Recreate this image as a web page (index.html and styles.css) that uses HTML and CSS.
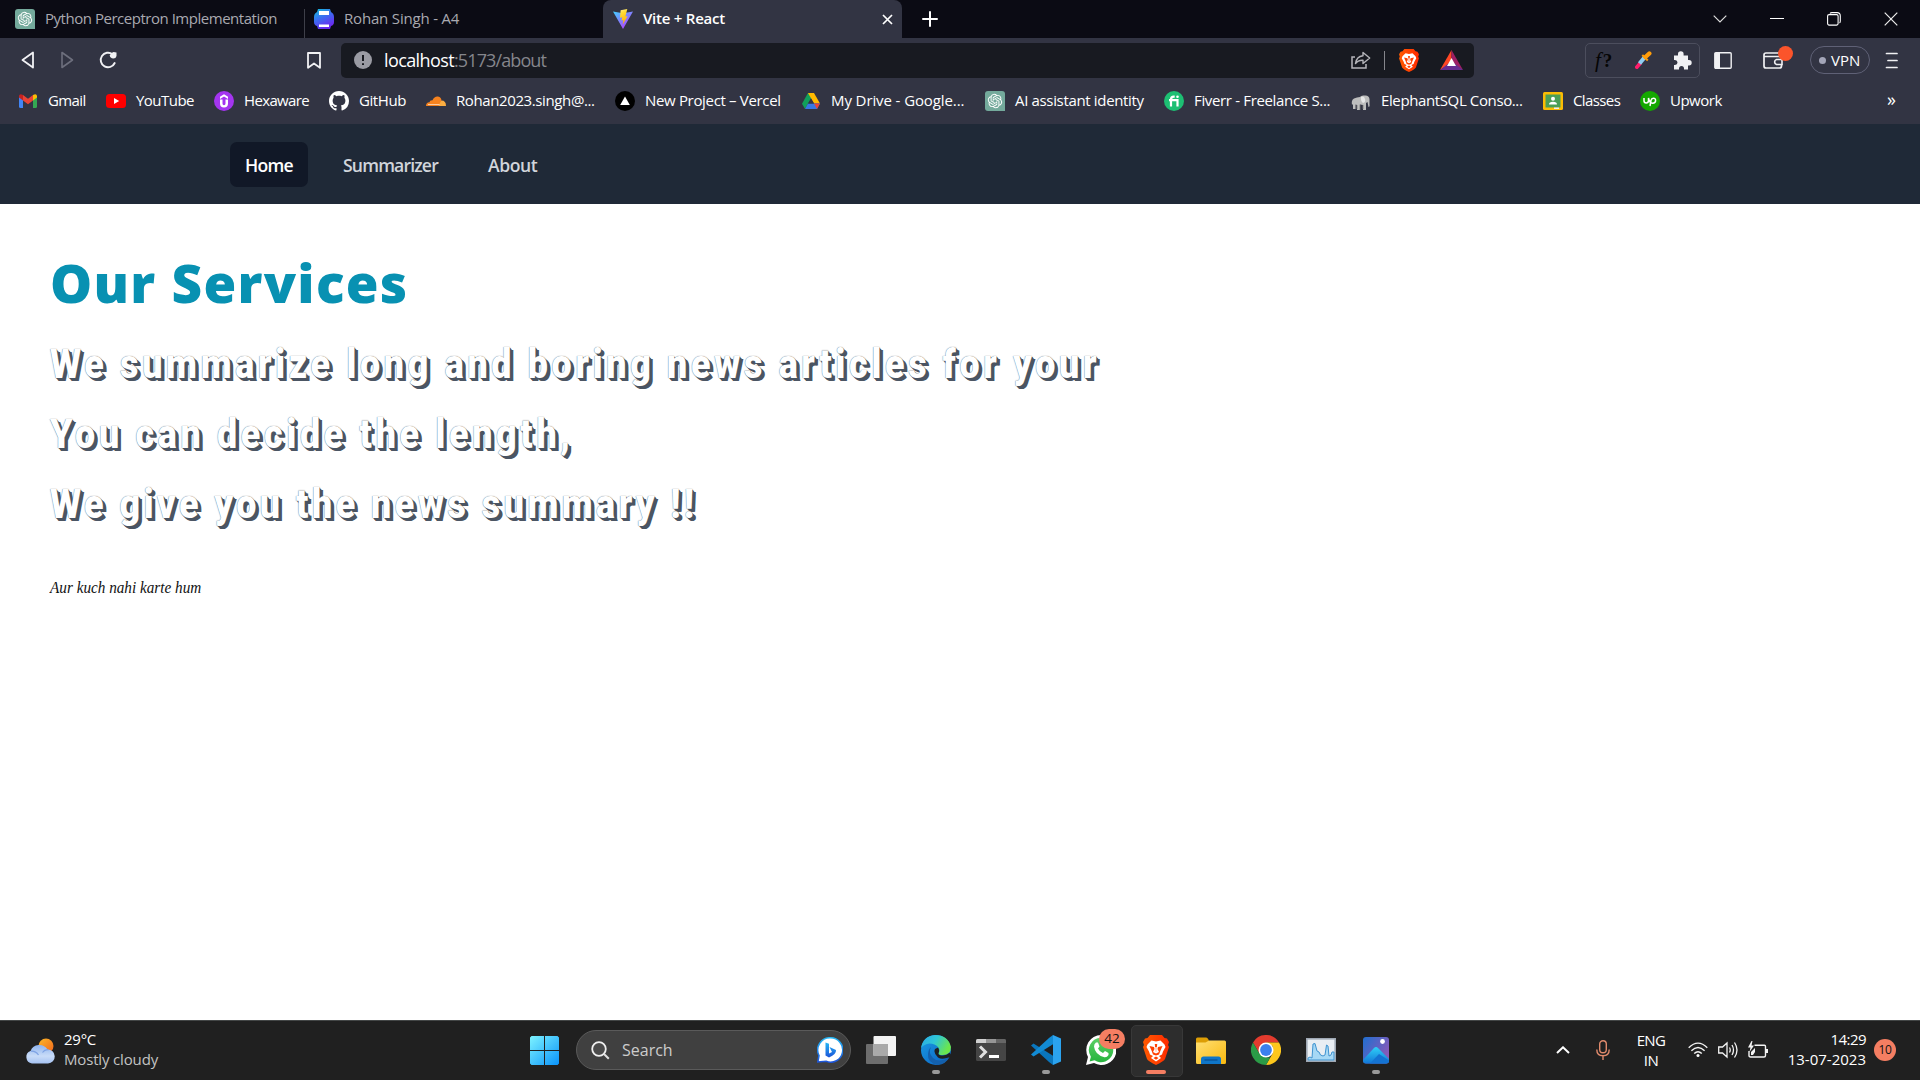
FILE: index.html
```html
<!DOCTYPE html>
<html lang="en">
<head>
<meta charset="utf-8">
<title>Vite + React</title>
<link rel="stylesheet" href="styles.css">
</head>
<body>
<svg class="defs" aria-hidden="true">
  <defs>
    <linearGradient id="vite-a" x1="0" y1="0" x2=".8" y2="1"><stop offset="0" stop-color="#41d1ff"/><stop offset="1" stop-color="#bd34fe"/></linearGradient>
    <linearGradient id="vite-b" x1=".4" y1="0" x2=".6" y2="1"><stop offset="0" stop-color="#ffea83"/><stop offset=".2" stop-color="#ffdd35"/><stop offset="1" stop-color="#ffa800"/></linearGradient>
    <linearGradient id="print" x1="0" y1="0" x2=".5" y2="1"><stop offset="0" stop-color="#12c2dc"/><stop offset=".5" stop-color="#3b6cf0"/><stop offset="1" stop-color="#6b2af0"/></linearGradient>
    <linearGradient id="win" x1="0" y1="0" x2="1" y2="1"><stop offset="0" stop-color="#7df3ff"/><stop offset="1" stop-color="#0a93fa"/></linearGradient>
    <linearGradient id="cloud" x1="0" y1="0" x2="0" y2="1"><stop offset="0" stop-color="#8fb4ee"/><stop offset=".6" stop-color="#c9dcf8"/><stop offset="1" stop-color="#a5c2f2"/></linearGradient>
    <linearGradient id="sun" x1="0" y1="0" x2="1" y2="1"><stop offset="0" stop-color="#fcb827"/><stop offset="1" stop-color="#f0641c"/></linearGradient>
    <linearGradient id="bing" x1="0" y1="0" x2="0" y2="1"><stop offset="0" stop-color="#25b7f5"/><stop offset="1" stop-color="#1d54d8"/></linearGradient>
    <linearGradient id="edge-a" x1="0" y1="0" x2="1" y2=".4"><stop offset="0" stop-color="#2aa8e8"/><stop offset=".5" stop-color="#2fc6d6"/><stop offset="1" stop-color="#6be64c"/></linearGradient>
    <linearGradient id="edge-b" x1="0" y1="0" x2="1" y2="1"><stop offset="0" stop-color="#1b9de2"/><stop offset="1" stop-color="#0a5fc4"/></linearGradient>
    <linearGradient id="folder" x1="0" y1="0" x2="1" y2="1"><stop offset="0" stop-color="#ffdf73"/><stop offset="1" stop-color="#f9b90f"/></linearGradient>
    <linearGradient id="wa" x1="0" y1="0" x2="0" y2="1"><stop offset="0" stop-color="#5bd066"/><stop offset="1" stop-color="#27b43e"/></linearGradient>
    <linearGradient id="photo" x1="0" y1="0" x2="1" y2=".6"><stop offset="0" stop-color="#1f6fd0"/><stop offset="1" stop-color="#8a5ab8"/></linearGradient>
    <linearGradient id="mount" x1="0" y1="0" x2="0" y2="1"><stop offset="0" stop-color="#2fd0f7"/><stop offset="1" stop-color="#1276d8"/></linearGradient>
    <linearGradient id="brave" x1="0" y1="0" x2="1" y2="0"><stop offset="0" stop-color="#ff5a00"/><stop offset="1" stop-color="#ff2a00"/></linearGradient>
    <symbol id="i-openai" viewBox="0 0 40 40"><path d="M6 0H34Q40 0 40 6V40H6Q0 40 0 34V6Q0 0 6 0Z" fill="#74aa9c"/><path transform="translate(5.6 5.6) scale(1.2)" fill="#fff" d="M22.2819 9.8211a5.9847 5.9847 0 0 0-.5157-4.9108 6.0462 6.0462 0 0 0-6.5098-2.9A6.0651 6.0651 0 0 0 4.9807 4.1818a5.9847 5.9847 0 0 0-3.9977 2.9 6.0462 6.0462 0 0 0 .7427 7.0966 5.98 5.98 0 0 0 .511 4.9107 6.051 6.051 0 0 0 6.5146 2.9001A5.9847 5.9847 0 0 0 13.2599 24a6.0557 6.0557 0 0 0 5.7718-4.2058 5.9894 5.9894 0 0 0 3.9977-2.9001 6.0557 6.0557 0 0 0-.7475-7.0729zm-9.022 12.6081a4.4755 4.4755 0 0 1-2.8764-1.0408l.1419-.0804 4.7783-2.7582a.7948.7948 0 0 0 .3927-.6813v-6.7369l2.02 1.1686a.071.071 0 0 1 .038.052v5.5826a4.504 4.504 0 0 1-4.4945 4.4944zm-9.6607-4.1254a4.4708 4.4708 0 0 1-.5346-3.0137l.142.0852 4.783 2.7582a.7712.7712 0 0 0 .7806 0l5.8428-3.3685v2.3324a.0804.0804 0 0 1-.0332.0615L9.74 19.9502a4.4992 4.4992 0 0 1-6.1408-1.6464zM2.3408 7.8956a4.485 4.485 0 0 1 2.3655-1.9728V11.6a.7664.7664 0 0 0 .3879.6765l5.8144 3.3543-2.0201 1.1685a.0757.0757 0 0 1-.071 0l-4.8303-2.7865A4.504 4.504 0 0 1 2.3408 7.872zm16.5963 3.8558L13.1038 8.364 15.1192 7.2a.0757.0757 0 0 1 .071 0l4.8303 2.7913a4.4944 4.4944 0 0 1-.6765 8.1042v-5.6772a.79.79 0 0 0-.407-.667zm2.0107-3.0231l-.142-.0852-4.7735-2.7818a.7759.7759 0 0 0-.7854 0L9.409 9.2297V6.8974a.0662.0662 0 0 1 .0284-.0615l4.8303-2.7866a4.4992 4.4992 0 0 1 6.6802 4.66zM8.3065 12.863l-2.02-1.1638a.0804.0804 0 0 1-.038-.0567V6.0742a4.4992 4.4992 0 0 1 7.3757-3.4537l-.142.0805L8.704 5.459a.7948.7948 0 0 0-.3927.6813zm1.0976-2.3654l2.602-1.4998 2.6069 1.4998v2.9994l-2.5974 1.4997-2.6067-1.4997Z"/></symbol>
    <symbol id="i-brave" viewBox="0 0 26 30"><path d="M7 0H19L21.500 3 24 3.500 26 7 25 10 26 12 22 24Q21 26 13 30 5 26 4 24L0 12 1 10 0 7 2 3.500 4.500 3Z" fill="url(#brave)"/><path d="M8.500 5.500 13 6.500 17.500 5.500 21.500 9.500 22.500 12 20 16.500 19 19.500 16 21 18 23 13 26.500 8 23 10 21 7 19.500 6 16.500 3.500 12 4.500 9.500Z" fill="#fff"/><path d="M6.500 11 11 12 11.500 14 10 17 13 18.500 16 17 14.500 14 15 12 19.500 11 17.500 15.500 16 19.500 13 20.500 10 19.500 8.500 15.500Z M10.500 23 13 21.500 15.500 23 13 24.800Z" fill="#ff4000"/><path d="M11.800 9H14.200L13.500 17H12.500Z" fill="#ff4000"/><path d="M12.300 12H13.700V17H12.300Z" fill="#fff"/></symbol>
  </defs>
</svg>

<header class="browser">
  <div class="tabs">
    <div class="tab tab-first"><svg class="ico"><use href="#i-openai"/></svg><span class="tab-title">Python Perceptron Implementation</span></div>
    <div class="tab tab-second">
      <svg class="ico" viewBox="0 0 20 20"><path d="M4 0H16L17 3Q20 4.500 20 8V13Q20 16 17 17L16 20H4L3 17Q0 16 0 13V8Q0 4.500 3 3Z" fill="url(#print)"/><path d="M5 2H15V6H5ZM5 15.500H15V18H5Z" fill="#fff"/></svg>
      <span class="tab-title">Rohan Singh - A4</span>
    </div>
    <div class="tab tab-active">
      <svg class="ico" viewBox="0 0 20 20"><path d="M0 2.500 10 20 20 2.500 10 4.300Z" fill="url(#vite-a)"/><path d="M14.300 0 7.600 1.300 7 8.800 9.200 8.300 8.600 11.400 10.400 10.900 9.700 15.500 14.600 7.200 12.400 7.600Z" fill="url(#vite-b)"/></svg>
      <span class="tab-title">Vite + React</span>
      <svg class="tab-close" viewBox="0 0 11 11"><path d="M1 1 10 10M10 1 1 10" stroke="#fff" stroke-width="1.700"/></svg>
    </div>
    <svg class="tab-new" viewBox="0 0 16 16"><path d="M8 1V15M1 8H15" stroke="#fff" stroke-width="2" stroke-linecap="round"/></svg>
    <div class="window-controls">
      <svg width="14" height="8" viewBox="0 0 14 8"><path d="M.7.7 7 7 13.300.7" fill="none" stroke="#ddd" stroke-width="1.200"/></svg>
      <svg width="14" height="2"><path d="M0 .5H14" stroke="#fff"/></svg>
      <svg width="14" height="14" viewBox="0 0 14 14" fill="none" stroke="#fff" stroke-width="1.100"><rect x=".6" y="2.600" width="10.500" height="10.500" rx="1.500"/><path d="M3 1.500Q3.500.6 5 .6H10Q13.300.6 13.300 4V9Q13.300 10.500 12.500 11"/></svg>
      <svg width="14" height="14" viewBox="0 0 14 14"><path d="M.7.7 13.300 13.300M13.300.7.7 13.300" stroke="#eee" stroke-width="1.200"/></svg>
    </div>
  </div>

  <div class="toolbar">
    <div class="nav-buttons">
      <svg width="14" height="18" viewBox="0 0 14 18"><path d="M12 1.500V16.500L1.500 9Z" fill="none" stroke="#f1f1f4" stroke-width="1.800" stroke-linejoin="round"/></svg>
      <svg width="14" height="18" viewBox="0 0 14 18"><path d="M2 1.500V16.500L12.500 9Z" fill="none" stroke="#6d6f7d" stroke-width="1.600" stroke-linejoin="round"/></svg>
      <svg width="18" height="18" viewBox="0 0 18 18"><path d="M13.500 3.200A7.300 7.300 0 1 0 15.700 12" fill="none" stroke="#f1f1f4" stroke-width="1.900" stroke-linecap="round"/><path d="M10.800 4.500Q11.500 1.500 14.500 1L17.500 1.500V5Q17 7.500 14.300 7.500 11 7 10.800 4.500Z" fill="#f1f1f4"/></svg>
    </div>
    <svg class="save" viewBox="0 0 14 17"><path d="M1 1H13V15.800L7 11.500 1 15.800Z" fill="none" stroke="#f1f1f4" stroke-width="1.800" stroke-linejoin="round"/></svg>
    <div class="address">
      <svg class="info" viewBox="0 0 18 18"><circle cx="9" cy="9" r="9" fill="#9a9ba3"/><path d="M9 4V10M9 12.200V14" stroke="#17191f" stroke-width="2"/></svg>
      <span class="url"><span class="host">localhost</span><span class="path">:5173/about</span></span>
      <svg class="share" viewBox="0 0 20 18"><path d="M4 6H1V17H15V13" fill="none" stroke="#b5b5ba" stroke-width="1.500"/><path d="M12 1.500 18.700 7 12 12.500V9.300Q7 9 4.500 12.500 5.500 5.500 12 4.800Z" fill="none" stroke="#b5b5ba" stroke-width="1.400" stroke-linejoin="round"/></svg>
      <span class="rule"></span>
      <svg class="shield"><use href="#i-brave"/></svg>
      <svg class="bat" viewBox="0 0 23 20"><path d="M11.500 0 0 20 11.500 13Z" fill="#ff4724"/><path d="M11.500 0 23 20 11.500 13Z" fill="#9e1f63"/><path d="M0 20H23L11.500 11Z" fill="#662d91"/><path d="M11.500 8 7 16H16Z" fill="#fff"/></svg>
    </div>
    <div class="extensions">
      <span class="formula"><i>f</i>?</span>
      <svg width="17" height="18" viewBox="0 0 17 18"><path d="M1.800 16.200 5 12.500" stroke="#ff1d6b" stroke-width="3.600" stroke-linecap="round"/><path d="M4.500 12.500 9.500 6.500" stroke="#8fcdf2" stroke-width="4"/><path d="M7.300 4 12.800 9.500" stroke="#ff9d0a" stroke-width="2"/><path d="M10.500 6 14.300 2.500" stroke="#ff9d0a" stroke-width="4.400" stroke-linecap="round"/></svg>
      <svg width="19" height="19" viewBox="0 0 19 19"><path d="M5 4.500V3A2.800 2.800 0 0 1 10.600 3V4.500H15V9H16A2.700 2.700 0 0 1 16 14.400H15V18.500H11V17.500A2.500 2.500 0 0 0 6 17.500V18.500H1V14H2A2.400 2.400 0 0 0 2 9H1V4.500Z" fill="#f1f1f4"/></svg>
    </div>
    <svg class="panel" viewBox="0 0 18 17"><rect x=".8" y=".8" width="16.400" height="15.400" rx="1" fill="none" stroke="#f1f1f4" stroke-width="1.400"/><path d="M1 1H6V16H1Z" fill="#f1f1f4"/></svg>
    <div class="wallet">
      <svg width="20" height="17" viewBox="0 0 20 17"><path d="M17 4.500V2.500Q17 1 15.500 1H3Q1 1 1 3V14Q1 16 3 16H16.500Q18.500 16 18.500 14V12M1 4.500H16.500Q18.500 4.500 18.500 7" fill="none" stroke="#f1f1f4" stroke-width="1.700"/><path d="M19 7.500H13.500A2.600 2.600 0 0 0 13.500 12.500H19Z" fill="none" stroke="#f1f1f4" stroke-width="1.600"/></svg>
      <span class="alert"></span>
    </div>
    <span class="vpn"><i></i><span>VPN</span></span>
    <svg class="menu" viewBox="0 0 14 17"><path d="M1.500 1.500H12M3 8.500H12M1.500 15.500H12" stroke="#f1f1f4" stroke-width="1.700" stroke-linecap="round"/></svg>
  </div>

  <nav class="bookmarks">
    <a><svg class="ico" viewBox="0 0 20 20"><path d="M1 4.500V15.500Q1 17 2.500 17H5V8Z" fill="#4285f4"/><path d="M19 4.500V15.500Q19 17 17.500 17H15V8Z" fill="#34a853"/><path d="M1 5Q1.500 2 5 4V9.500L1 6.500Z" fill="#c5221f"/><path d="M19 5Q18.500 2 15 4V9.500L19 6.500Z" fill="#fbbc04"/><path d="M5 4 10 7.800 15 4V9.500L10 13.300 5 9.500Z" fill="#ea4335"/></svg><span>Gmail</span></a>
    <a><svg class="ico" viewBox="0 0 20 20"><rect y="3" width="20" height="14" rx="3.500" fill="#f00"/><path d="M8 7V13L13.200 10Z" fill="#fff"/></svg><span>YouTube</span></a>
    <a><svg class="ico" viewBox="0 0 20 20"><circle cx="10" cy="10" r="10" fill="#a435f0"/><path d="M6 5.700 10 3.300 14 5.700V8L10 5.600 6 8ZM6 8.500H8.500V12.500Q8.500 14.300 10 14.300T11.500 12.500V8.500H14V12.500Q14 16.500 10 16.500T6 12.500Z" fill="#fff"/></svg><span>Hexaware</span></a>
    <a><svg class="ico" viewBox="0 0 16 16"><path fill="#fff" d="M8 0C3.580 0 0 3.580 0 8c0 3.540 2.290 6.530 5.470 7.590.4.070.55-.17.55-.38 0-.19-.01-.82-.01-1.490-2.010.37-2.530-.49-2.690-.94-.09-.23-.48-.94-.82-1.130-.28-.15-.68-.52-.01-.53.63-.01 1.080.58 1.230.82.72 1.210 1.870.87 2.330.66.070-.52.28-.87.51-1.070-1.780-.2-3.640-.89-3.640-3.950 0-.87.31-1.590.82-2.150-.08-.2-.36-1.020.08-2.120 0 0 .67-.21 2.200.82.64-.18 1.320-.27 2-.27s1.360.09 2 .27c1.530-1.040 2.200-.82 2.200-.82.44 1.100.16 1.920.08 2.120.51.56.82 1.270.82 2.150 0 3.070-1.870 3.750-3.650 3.950.29.25.54.73.54 1.480 0 1.070-.01 1.930-.01 2.200 0 .21.15.46.55.38A8.010 8.010 0 0 0 16 8c0-4.420-3.580-8-8-8z"/></svg><span>GitHub</span></a>
    <a><svg class="ico" viewBox="0 0 20 20"><path d="M0 15Q0 11.500 3.500 11.300 3.500 9 6.500 9.200 8.500 5 12 5.500 15.500 6 15.500 10L14.500 15Z" fill="#f6821f"/><path d="M15.500 9.500Q20 9.500 20 15H12.500Q13.500 12.500 15.500 9.500Z" fill="#fbad41"/><path d="M2 13.500H13.500" stroke="#fff" stroke-width=".6"/></svg><span>Rohan2023.singh@...</span></a>
    <a><svg class="ico" viewBox="0 0 20 20"><circle cx="10" cy="10" r="10" fill="#000"/><path d="M10 5.500 14.800 14H5.200Z" fill="#fff"/></svg><span>New Project – Vercel</span></a>
    <a><svg class="ico" viewBox="0 0 20 20"><path d="M7 2H13L10 7.500 4 18 1 12.800Z" fill="#11a05a"/><path d="M7 2H13L19 12.500H13Z" fill="#ffba00"/><path d="M7 12.500H19L16 18H4Z" fill="#3777e3"/><path d="M13 12.500H19L16 18Z" fill="#ea4335"/><path d="M10 7.500 13 12.500H7Z" fill="#323443"/></svg><span>My Drive - Google...</span></a>
    <a><svg class="ico"><use href="#i-openai"/></svg><span>AI assistant identity</span></a>
    <a><svg class="ico" viewBox="0 0 20 20"><circle cx="10" cy="10" r="10" fill="#1dbf73"/><path d="M7 15.500V8.500Q7 5.600 9.700 5.600H10.700M5 9.200H13.500V15.500" fill="none" stroke="#fff" stroke-width="2.200"/><circle cx="13.500" cy="5.800" r="1.300" fill="#fff"/></svg><span>Fiverr - Freelance S...</span></a>
    <a><svg class="ico" viewBox="0 0 20 20"><path d="M1 14Q0 9 3 7.500T9 6Q10 4 13.500 4.500 18 4 18.500 8L18.500 13Q19 16 17.500 16L16.500 11 15 12V19H12V14L9 13.500V19H6V14L4.500 13.500V18H2V13Z" fill="#bdbdbd"/><path d="M10 6Q13 4.500 14 8T12 12Q9.500 10 10 6Z" fill="#e6e6e6"/><path d="M9 13.500V19M6 14V18M12 14V18" stroke="#777" stroke-width=".8"/></svg><span>ElephantSQL Conso...</span></a>
    <a><svg class="ico" viewBox="0 0 20 20"><rect y="1" width="20" height="18" rx="1.500" fill="#fbbc04"/><rect x="2.500" y="3.500" width="15" height="13" fill="#4b9e56"/><circle cx="10" cy="7.800" r="2" fill="#fff"/><path d="M6 13.500Q6 10.800 10 10.800T14 13.500Z" fill="#fff"/><path d="M11 16.500H16V18H11Z" fill="#eee"/></svg><span>Classes</span></a>
    <a><svg class="ico" viewBox="0 0 20 20"><circle cx="10" cy="10" r="10" fill="#14a800"/><path d="M4 7V9.500Q4 12 6.200 12T8.500 9.500V7Q9.500 12 12.500 12.200 15.600 12 15.600 9.500T13.200 7.200Q11.500 7.200 11 9.300L10 15" fill="none" stroke="#fff" stroke-width="1.500"/></svg><span>Upwork</span></a>
    <span class="more">»</span>
  </nav>
</header>

<nav class="site-nav">
  <a class="current">Home</a><a>Summarizer</a><a>About</a>
</nav>

<main class="page">
  <h1>Our Services</h1>
  <p class="lead">We summarize long and boring news articles for your</p>
  <p class="lead">You can decide the length,</p>
  <p class="lead">We give you the news summary !!</p>
  <p class="note">Aur kuch nahi karte hum</p>
</main>

<footer class="taskbar">
  <div class="weather">
    <svg width="30" height="26" viewBox="0 0 30 26"><circle cx="21" cy="8" r="7.500" fill="url(#sun)"/><path d="M7 25.500A6.500 6.500 0 0 1 5.500 13 9.500 9.500 0 0 1 22.500 11.500 7 7 0 0 1 23 25.500Z" fill="url(#cloud)"/><path d="M6 13.200Q11 13 13.500 17M17.500 14.500Q20 11 23.500 11.800" fill="none" stroke="#7ea3e4" stroke-width="1.200"/></svg>
    <div class="report"><div class="temp">29°C</div><div class="sky">Mostly cloudy</div></div>
  </div>
  <div class="apps">
    <svg class="start" viewBox="0 0 29 29"><path d="M1.500 0H14V14H0V1.500ZM15 0H27.500L29 1.500V14H15ZM0 15H14V29H1.500L0 27.500ZM15 15H29V27.500L27.500 29H15Z" fill="url(#win)"/></svg>
    <div class="search">
      <svg width="19" height="19" viewBox="0 0 19 19"><circle cx="8" cy="8" r="6.800" fill="#4b4b4b" stroke="#f0f0f0" stroke-width="1.800"/><path d="M13 13 17.800 17.800" stroke="#e0e0e0" stroke-width="2"/></svg>
      <span class="search-text">Search</span>
      <svg class="bing" width="26" height="26" viewBox="0 0 26 26"><path d="M13.500.8A12.200 12.200 0 1 1 9 24.300L.8 25 2 18.500A12.200 12.200 0 0 1 13.500.8Z" fill="#fff" stroke="url(#bing)" stroke-width="1.600"/><path d="M8.500 5.500 12 6.800V16.500L15 15 12.500 10 19 13Q19.500 17 12 20.500L8.500 18.500Z" fill="url(#bing)"/></svg>
    </div>
    <div class="slot"><svg width="30" height="28" viewBox="0 0 30 28"><rect y="8" width="22" height="20" rx="1" fill="#6d6d6d"/><rect x="7.500" width="22.500" height="20" rx="1" fill="#f3f3f3"/><path d="M7.500 8H22V20H7.500Z" fill="#a9a9a9"/></svg></div>
    <div class="slot run"><svg width="30" height="30" viewBox="0 0 30 30"><circle cx="15" cy="15" r="15" fill="url(#edge-b)"/><path d="M0 13Q2 1 14 0 27 0 30 12 30 20 21.500 20 17 20 17.500 18 19.500 15 17 12 14 8.500 8.500 8.500 3 9 0 13Z" fill="url(#edge-a)"/><path d="M10 12Q7 18 12 23 18 28.500 28.500 22 25 29 17 30 6 28 7 19 7.500 14 10 12Z" fill="#1460ac"/><path d="M17.500 18Q17 20.500 22 20.500 26 20.300 28.500 17.800L31 21 28.500 22.200Q21 25 17 22.500 12 18 14 14L17 12.500Q19 15.500 17.500 18Z" fill="#202020"/></svg></div>
    <div class="slot"><svg width="30" height="22" viewBox="0 0 30 22"><rect width="30" height="22" rx="1.500" fill="#454545"/><path d="M0 4V1.500Q0 0 1.500 0H10V4Z" fill="#d0d0d0"/><path d="M10 0H20V4H10Z" fill="#969696"/><path d="M20 0H28.500Q30 0 30 1.500V4H20Z" fill="#666"/><path d="M4 7.500 9.500 13 4 18.500" fill="none" stroke="#e0e0e0" stroke-width="3"/><path d="M13 17.500H23" stroke="#fff" stroke-width="3"/></svg></div>
    <div class="slot run"><svg width="30" height="30" viewBox="0 0 30 30"><path d="M2.500 8.500 0 10.500 18 27 22 30 24 22Z" fill="#0a76bd"/><path d="M2.500 21.500 0 19.500 18 3 22 0 24 8Z" fill="#128bd4"/><path d="M22 0 30 3.500V26.500L22 30V21.500 8.500Z" fill="#2ba3ef"/></svg></div>
    <div class="slot"><svg width="30" height="30" viewBox="0 0 30 30"><path d="M15 0A15 15 0 1 1 8 28L0 30 2 22A15 15 0 0 1 15 0Z" fill="#fff"/><path d="M15 2.800A12.200 12.200 0 1 1 8.500 25.300L3.600 26.400 4.900 21.700A12.200 12.200 0 0 1 15 2.800Z" fill="url(#wa)"/><path d="M10 7.500H12L13.500 11.500 12 13.500Q13.500 17 17 18L19 16 22.500 18V20Q21 22.500 18.500 22.200 9 20 8 11.500 8 9 10 7.500Z" fill="#fff"/></svg><span class="badge">42</span></div>
    <div class="slot active"><svg width="26" height="30"><use href="#i-brave"/></svg></div>
    <div class="slot"><svg width="30" height="27" viewBox="0 0 30 27"><path d="M0 8V2Q0 .5 1.500.5H10Q12 .5 13 4L30 5V10H0Z" fill="#dd9e05"/><path d="M0 5.500H9.500L13 3.500H28.500Q30 3.500 30 5V25.500Q30 27 28.500 27H1.500Q0 27 0 25.500Z" fill="url(#folder)"/><path d="M5 27V22Q5 19.500 7.500 19.500H22.500Q25 19.500 25 22V27Z" fill="#0f76c9"/><path d="M8.500 23H21.500" stroke="#0a4f91" stroke-width="1.200"/></svg></div>
    <div class="slot"><svg width="30" height="30" viewBox="0 0 30 30"><path d="M2 7.500A15 15 0 0 1 28 7.500H15L8.500 18.700Z" fill="#e33b2e"/><path d="M28 7.500A15 15 0 0 1 15 30L21.500 18.700 21.500 11 15 7.500Z" fill="#fdc71c"/><path d="M15 30A15 15 0 0 1 2 7.500L8.500 18.700 15 22.500H19.300Z" fill="#2b9b47"/><circle cx="15" cy="15" r="7.500" fill="#fff"/><circle cx="15" cy="15" r="5.900" fill="#3b80ee"/></svg></div>
    <div class="slot"><svg width="30" height="24" viewBox="0 0 30 24"><rect x=".8" y=".8" width="28.400" height="22.400" fill="#e9eef3" stroke="#9fa8b4" stroke-width="1.600"/><path d="M2 20 4 19 6 20 7 6 9 5.500 11 13 13 14 14.500 17 17 18 19 17 20.500 7 22 8 23 18 25 17 26 14 28 14V22H2Z" fill="#a6d8f5" stroke="#3f93d0"/></svg></div>
    <div class="slot run"><svg width="26" height="27" viewBox="0 0 26 27"><rect width="26" height="26.500" rx="3" fill="url(#photo)"/><path d="M0 23 11 11Q13 9 15 11L26 22V23.500Q26 26.500 23 26.500H3Q0 26.500 0 23.500Z" fill="url(#mount)"/><path d="M7 26.500 16 17 26 23.500Q26 26.500 23 26.500Z" fill="#1473d2"/><circle cx="19.500" cy="4.500" r="2.400" fill="#fff"/></svg></div>
  </div>
  <div class="tray">
    <svg class="up" width="14" height="8" viewBox="0 0 14 8"><path d="M1 7 7 1.300 13 7" fill="none" stroke="#fff" stroke-width="2"/></svg>
    <svg class="mic" width="14" height="20" viewBox="0 0 14 20" fill="none" stroke="#e08a6c" stroke-width="1.400"><rect x="3.700" y=".8" width="6.600" height="12" rx="3.300"/><path d="M.8 9.500Q.8 15.700 7 15.700T13.200 9.500M7 15.700V20"/></svg>
    <div class="lang"><span>ENG</span><span>IN</span></div>
    <svg class="wifi" width="20" height="16" viewBox="0 0 20 16" fill="none" stroke="#f3f3f3" stroke-width="1.400"><path d="M.7 5.800Q10-3.500 19.300 5.800M3.400 8.800Q10 2.200 16.600 8.800M6.200 11.600Q10 7.800 13.800 11.600"/><circle cx="10" cy="13.500" r="1.500" fill="#fff" stroke="none"/></svg>
    <svg class="vol" width="20" height="18" viewBox="0 0 20 18" fill="none" stroke="#f3f3f3" stroke-width="1.300"><path d="M.7 6H4.500L9 2V16L4.500 12H.7ZM11.500 6.500Q13 9 11.500 11.500M14 4Q17 9 14 14M16.500 1.500Q21.500 9 16.500 16.500"/></svg>
    <svg class="batt" width="20" height="18" viewBox="0 0 20 18"><path d="M6.500 4.200H16.500Q17.500 4.200 17.500 5.500V14.500Q17.500 16 16 16H2.500Q1 16 1 14.500V10" fill="none" stroke="#f3f3f3" stroke-width="1.400"/><path d="M18 8H20V12H18ZM3.500 0 0 6.500H2.500L1.500 11 6 4.500H3.500L4.500 0ZM3 14V11L7 7V11L5 14Z" fill="#f3f3f3"/></svg>
    <div class="clock"><span class="time">14:29</span><span>13-07-2023</span></div>
    <span class="count">10</span>
  </div>
</footer>
</body>
</html>
```
FILE: styles.css
```css
* { box-sizing: border-box; }
body { margin: 0; width: 1920px; height: 1080px; overflow: hidden; display: flex; flex-direction: column; background: #fff; font-family: "Open Sans", "Noto Sans", sans-serif; white-space: nowrap; }
svg { display: block; flex: none; }
.defs { position: absolute; width: 0; height: 0; }
.ico { width: 20px; height: 20px; }

/* browser chrome */
.browser { height: 124px; background: #323443; color: #fff; flex: none; }
.tabs { height: 38px; background: #0b0b14; display: flex; align-items: center; }
.tab { height: 38px; display: flex; align-items: center; gap: 10px; font-size: 15px; color: #a9a9b0; }
.tab-title { padding-bottom: 2px; }
.tab-first { width: 304px; padding-left: 15px; letter-spacing: -.474px; }
.tab-second { width: 299px; padding-left: 10px; background: linear-gradient(#3e3f49, #3e3f49) 0 9px / 1px 29px no-repeat; letter-spacing: -.18px; }
.tab-active { width: 299px; padding: 0 9px 0 10px; background: #323443; color: #fff; font-weight: 600; border-radius: 8px 8px 0 0; letter-spacing: -.232px; }
.tab-close { width: 11px; height: 11px; margin-left: auto; }
.tab-new { width: 16px; height: 16px; margin-left: 20px; }
.window-controls { display: flex; align-items: center; gap: 43px; margin-left: auto; padding-right: 22px; }

.toolbar { height: 44px; display: flex; align-items: center; padding-left: 21px; }
.nav-buttons { display: flex; gap: 25px; width: 286px; }
.save { width: 14px; height: 17px; margin-right: 20px; }
.address { width: 1133px; height: 35px; background: #181a21; border-radius: 5px; display: flex; align-items: center; padding: 0 11px 0 13px; }
.info { width: 18px; height: 18px; margin-right: 12px; }
.url { font-size: 18px; }
.host { letter-spacing: -.601px; }
.path { color: #85868c; letter-spacing: -.891px; }
.share { width: 20px; height: 18px; margin-left: auto; }
.rule { width: 1px; height: 19px; background: #85868c; margin: 0 14px 0 13px; }
.shield { width: 20px; height: 23px; }
.bat { width: 23px; height: 20px; margin-left: 21px; }
.extensions { width: 115px; height: 35px; border: 1px solid #4c4e5d; border-radius: 5px; margin-left: 111px; padding: 0 7px; display: flex; align-items: center; justify-content: space-between; }
.formula { font: bold 19px/20px "Liberation Serif", serif; color: #050505; width: 20px; }
.formula i { font-size: 21px; font-weight: normal; margin: 0 2px 0 2px; }
.panel { width: 18px; height: 17px; margin-left: 14px; }
.wallet { position: relative; margin-left: 31px; }
.alert { position: absolute; left: 15px; top: -6px; width: 15px; height: 15px; border-radius: 50%; background: #fb542b; }
.vpn { width: 60px; height: 28px; border: 1px solid #5f6176; border-radius: 14px; margin-left: 27px; display: flex; align-items: center; padding-left: 8px; gap: 5px; font-size: 15px; }
.vpn span { padding-bottom: 1px; }
.vpn i { width: 7px; height: 7px; border-radius: 50%; background: #a3a5b8; }
.menu { width: 14px; height: 17px; margin-left: 15px; }

.bookmarks { height: 38px; display: flex; align-items: center; gap: 20px; padding-left: 18px; font-size: 15px; }
.bookmarks a { display: flex; align-items: center; gap: 10px; flex: none; }
.bookmarks a span { padding-bottom: 2px; }
.bookmarks a:nth-child(1) { width: 68px; letter-spacing: -.6px; }
.bookmarks a:nth-child(2) { width: 88px; letter-spacing: -.53px; }
.bookmarks a:nth-child(3) { width: 95px; letter-spacing: -.65px; }
.bookmarks a:nth-child(4) { width: 77px; letter-spacing: -.41px; }
.bookmarks a:nth-child(5) { width: 169px; letter-spacing: -.39px; }
.bookmarks a:nth-child(6) { width: 166px; letter-spacing: -.33px; }
.bookmarks a:nth-child(7) { width: 164px; letter-spacing: -.1px; }
.bookmarks a:nth-child(8) { width: 159px; letter-spacing: -.34px; }
.bookmarks a:nth-child(9) { width: 167px; letter-spacing: -.34px; }
.bookmarks a:nth-child(10) { width: 172px; letter-spacing: -.38px; }
.bookmarks a:nth-child(11) { width: 77px; letter-spacing: -.6px; }
.bookmarks a:nth-child(12) { letter-spacing: -.5px; }
.more { margin-left: auto; padding: 0 24px 4px 0; font-size: 18px; }

/* site */
.site-nav { height: 80px; flex: none; background: #1f2937; display: flex; align-items: center; padding: 1px 0 0 230px; gap: 20px; font-size: 17.6px; font-weight: 600; color: #d1d5db; }
.site-nav a { height: 45px; padding: 0 15px; border-radius: 7px; display: flex; align-items: center; letter-spacing: -.4px; }
.site-nav a:nth-child(2) { letter-spacing: -.84px; }
.site-nav .current { background: #111827; color: #fff; letter-spacing: -.72px; }

.page { flex: 1; padding: 43px 50px; }
.page h1 { margin: 0 0 10px; font: 800 53px/72px "Open Sans", sans-serif; color: #0891b2; letter-spacing: 1.3px; }
.page p { margin: 0; }
.page .lead { font: 900 41px/70px Roboto, sans-serif; color: #fff; letter-spacing: 4.25px; text-shadow: 0 0 1px #444, 1px 1px 0 #4b5563, 2px 2px 0 #4b5563, 3px 3px 0 #4b5563, 4px 3px 0 #4b5563; transform: scaleX(.873); transform-origin: left; }
.page .lead:nth-of-type(3) { letter-spacing: 4.05px; }
.page .note { font: italic 17px/28px "Liberation Serif", serif; color: #111; margin-top: 35px; transform: scaleX(.895); transform-origin: left; }

/* taskbar */
.taskbar { height: 60px; flex: none; background: #202020; border-top: 1px solid #434646; color: #fff; display: flex; align-items: center; }
.weather { width: 530px; padding-left: 25px; display: flex; align-items: center; gap: 9px; font-size: 15px; line-height: 20px; }
.report { padding-bottom: 3px; }
.temp { letter-spacing: -.26px; }
.sky { color: #c3c3c3; letter-spacing: -.16px; }
.apps { display: flex; align-items: center; padding-bottom: 1px; }
.start { width: 29px; height: 29px; margin-right: 17px; }
.search { width: 275px; height: 40px; border: 1px solid #5a5a5a; border-radius: 20px; background: #404040; display: flex; align-items: center; padding: 0 7px 0 14px; gap: 12px; font-size: 16px; color: #ccc; margin-right: 2px; }
.bing { margin-left: auto; }
.slot { position: relative; width: 55px; height: 50px; display: flex; align-items: center; justify-content: center; }
.slot.run::after { content: ""; position: absolute; left: 24px; bottom: 1px; width: 8px; height: 4px; border-radius: 2px; background: #999; }
.slot.active::before { content: ""; position: absolute; left: 3px; top: 0; width: 50px; height: 50px; border-radius: 5px; background: #2d2d2d; border: 1px solid #383838; }
.slot.active::after { content: ""; position: absolute; left: 18px; bottom: 1px; width: 20px; height: 4px; border-radius: 2px; background: #f57e62; }
.slot.active svg { position: relative; }
.badge { position: absolute; left: 26px; top: 4px; width: 26px; height: 20px; border-radius: 10px; background: #f57e62; color: #111; font-size: 13.5px; line-height: 19px; text-align: center; }
.tray { margin-left: auto; display: flex; align-items: center; padding: 0 24px 1px 0; font-size: 15px; line-height: 20px; }
.mic { margin-left: 26px; }
.lang { width: 40px; margin-left: 21px; display: flex; flex-direction: column; align-items: center; letter-spacing: -.6px; }
.wifi { margin-left: 17px; }
.vol { margin-left: 10px; }
.batt { margin-left: 10px; }
.clock { width: 78px; margin-left: 20px; display: flex; flex-direction: column; align-items: flex-end; padding-bottom: 2px; }
.time { letter-spacing: -.55px; }
.count { width: 22px; height: 22px; border-radius: 50%; background: #f57e62; color: #111; font-size: 12px; line-height: 22px; text-align: center; margin-left: 8px; letter-spacing: -.3px; }
```
